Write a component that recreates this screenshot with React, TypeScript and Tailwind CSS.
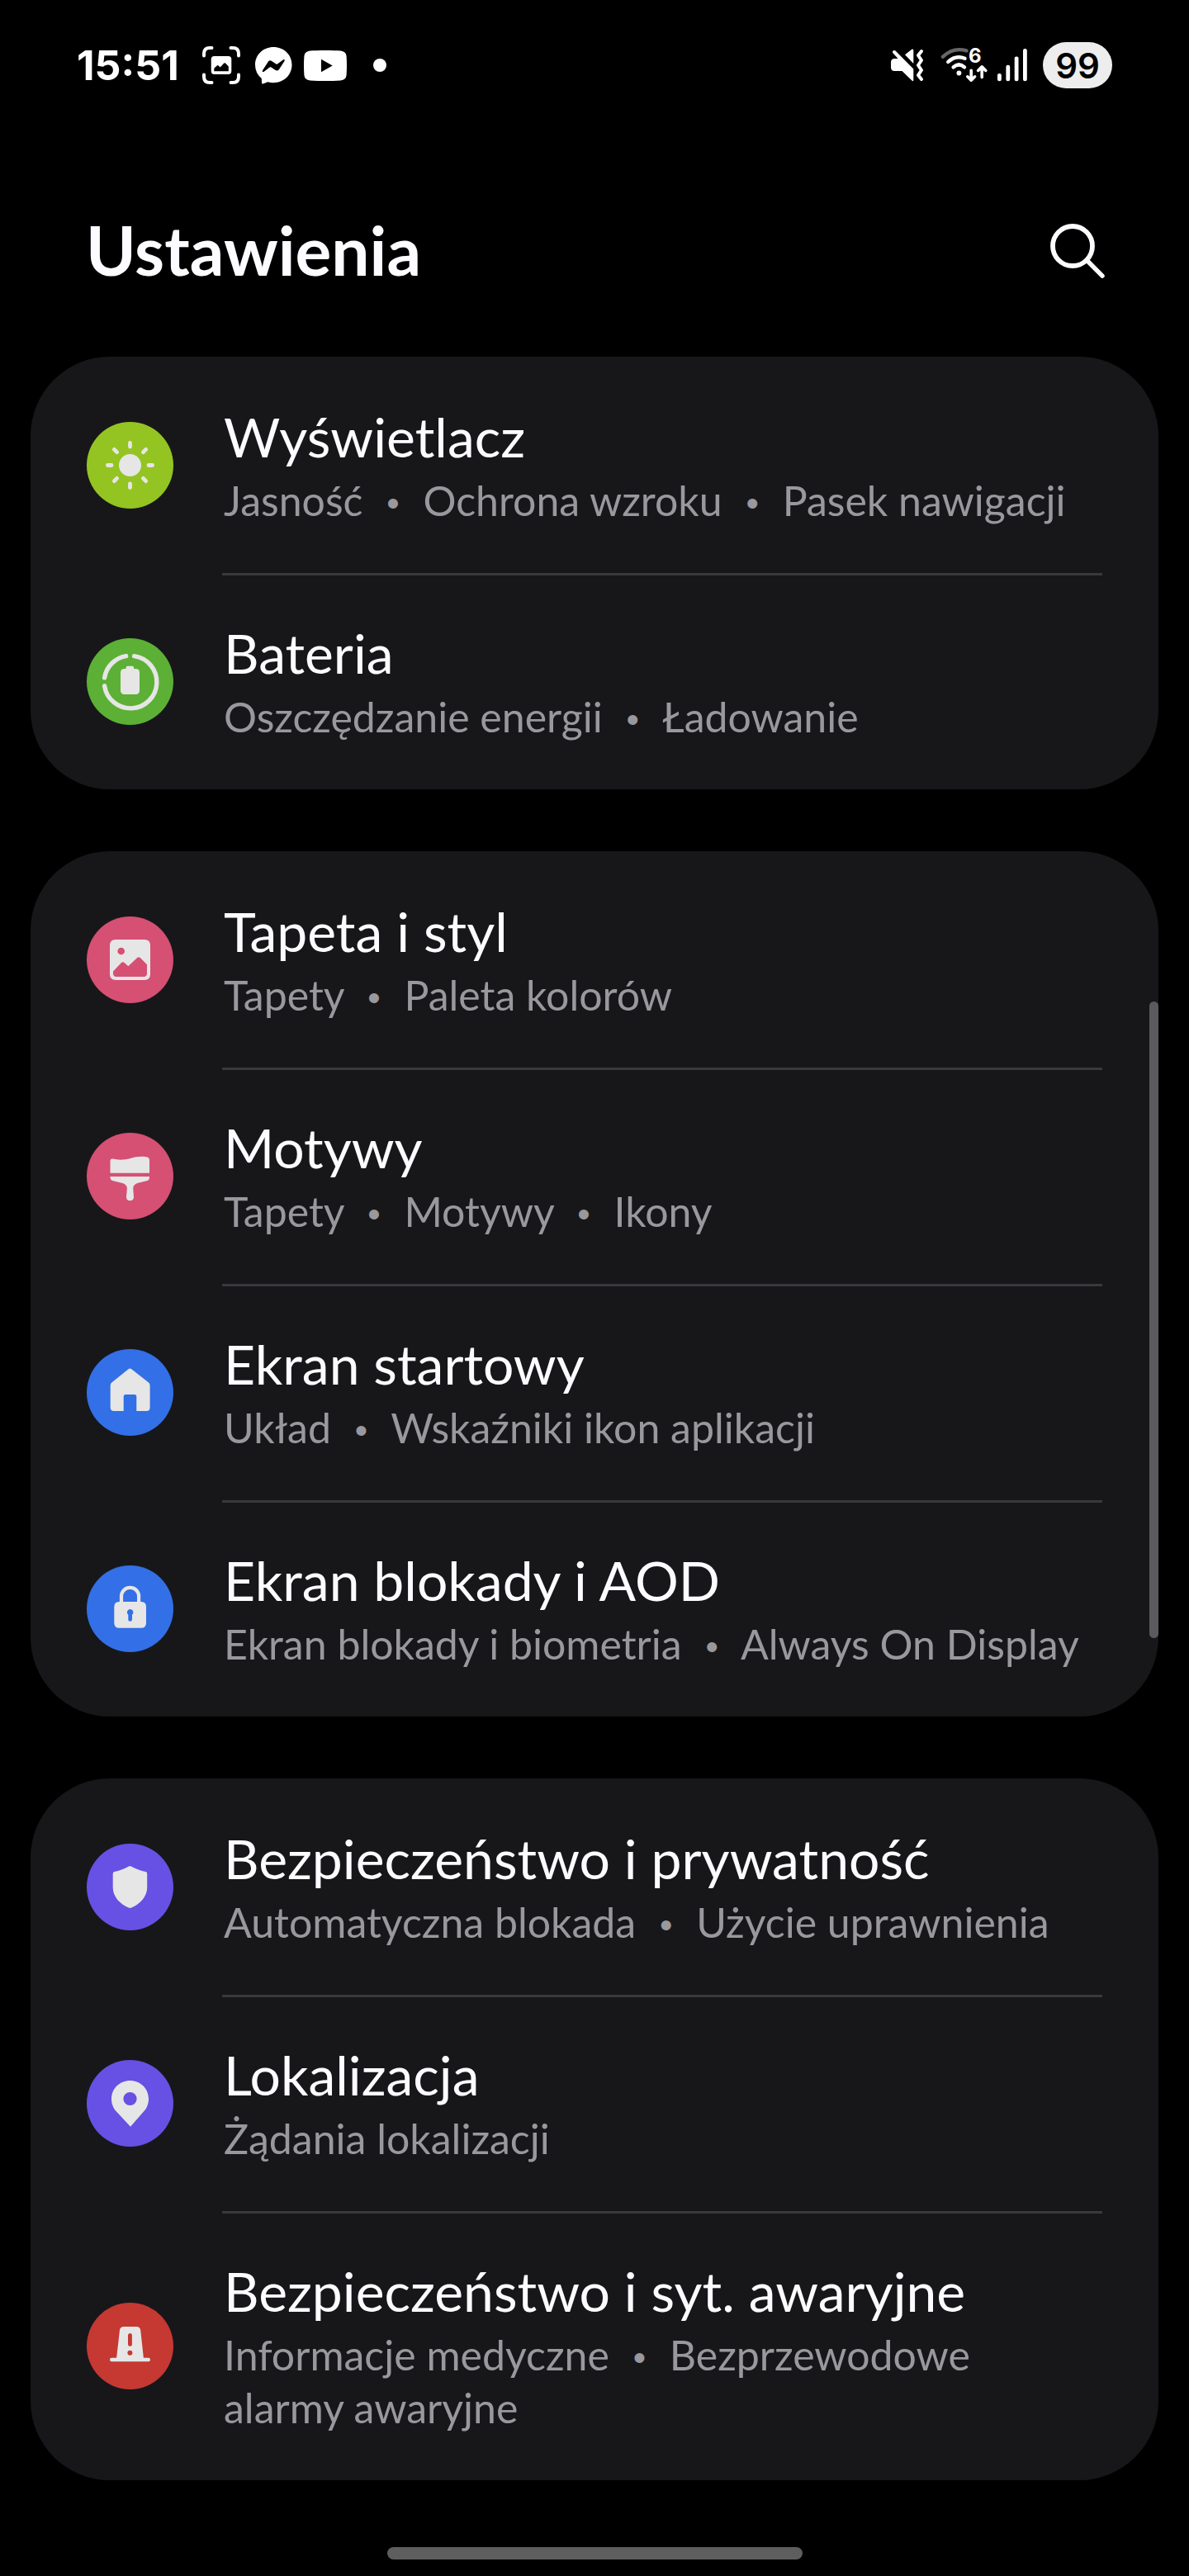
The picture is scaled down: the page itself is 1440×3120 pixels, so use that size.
import { Fragment } from 'react';
import type { ReactNode } from 'react';

// Types
interface SettingItem {
  title: string;
  details: string[];
  color: string;
  icon: ReactNode;
}

// Icons are drawn on the same 105 unit grid as the round badge
const SunIcon = (
  <>
    <circle cx="52.5" cy="52.5" r="13.5" />
    <g stroke="currentColor" strokeWidth="4.8" strokeLinecap="round">
      {[0, 45, 90, 135, 180, 225, 270, 315].map((angle) => (
        <path key={angle} d="M52.5 25.4V30" transform={`rotate(${angle} 52.5 52.5)`} />
      ))}
    </g>
  </>
);

const BatteryIcon = (
  <>
    <path
      d="M47.6 21.6A31.6 31.6 0 0 0 21.6 47.8M57.6 21.6A31.8 31.8 0 1 1 21.6 57.8"
      fill="none"
      stroke="currentColor"
      strokeWidth="5.4"
      strokeLinecap="round"
    />
    <rect x="41" y="37" width="23" height="31" rx="4.5" />
    <rect x="47.7" y="33.7" width="9.3" height="8" rx="1.5" />
  </>
);

const PictureIcon = (
  <path
    fillRule="evenodd"
    d="M35 28H70Q77 28 77 35V70Q77 77 70 77H35Q28 77 28 70V35Q28 28 35 28ZM41.7 37.7A4.3 4.3 0 1 0 41.7 46.3A4.3 4.3 0 1 0 41.7 37.7ZM32 66.5L42 56Q43.9 54.4 45.6 56L50.3 60.2L61.2 50Q63 48.4 64.8 50L73 58.2V69Q73 73 69 73H36Q32 73 32 69Z"
  />
);

const BrushIcon = (
  <>
    <path d="M28.5 34Q28.5 31 31.5 31.6C38 33.2 46 32.9 53 31C60 28.6 69 28 74 29.8Q76 30.6 76 33V48.7H28.5Z" />
    <path d="M28.5 53H76V54.6Q76 57.2 73.4 58L61.5 61Q56.4 62.8 56.2 67L57 77.5Q57 82.3 52.4 82.3Q48 82.3 48 77.5L48.9 67Q48.6 62.8 43.4 61L31.2 58Q28.5 57.2 28.5 54.6Z" />
  </>
);

const HomeIcon = (
  <path d="M50.5 24.2Q52.4 23 54.3 24.2L75 40.6Q76.6 42 76.6 44V70.8Q76.6 75 72.4 75H60.3V57.5Q60.3 55 57.8 55H47.2Q44.7 55 44.7 57.5V75H33Q28.7 75 28.7 70.8V44Q28.7 42 30.3 40.6Z" />
);

const LockIcon = (
  <>
    <path d="M42 47V36.5A10.6 10.6 0 0 1 63.1 36.5V47" fill="none" stroke="currentColor" strokeWidth="4.2" />
    <path
      fillRule="evenodd"
      d="M39.3 44H66Q72 44 72 50V69.7Q72 75.7 66 75.7H39.3Q33.3 75.7 33.3 69.7V50Q33.3 44 39.3 44ZM52.6 52.9A3.9 3.9 0 0 0 50.3 59.8V65.5Q50.3 67.8 52.6 67.8Q55 67.8 55 65.5V59.8A3.9 3.9 0 0 0 52.6 52.9Z"
    />
  </>
);

const ShieldIcon = (
  <path d="M51 27.4Q52.4 26.8 53.8 27.4C60 30.5 65.5 33 71.5 34Q73.2 34.4 73.2 36.4V53C73.2 64.5 64.5 73 54.2 77.6Q52.4 78.4 50.7 77.6C40.4 73 31.7 64.5 31.7 53V36.4Q31.7 34.4 33.5 34C39.4 33 45 30.5 51 27.4Z" />
);

const PinIcon = (
  <path
    fillRule="evenodd"
    d="M52.5 25C65 25 75 34.6 75 47.2C75 53.5 72.6 58.6 69 62.6L53 80.7L36 62.6C32.4 58.6 30 53.5 30 47.2C30 34.6 40 25 52.5 25ZM52.5 38.9A8.1 8.1 0 1 0 52.5 55.1A8.1 8.1 0 1 0 52.5 38.9Z"
  />
);

const SirenIcon = (
  <>
    <path
      fillRule="evenodd"
      d="M45 29H60Q65 29 65.3 34L69 68H36L39.9 34Q40.2 29 45 29ZM52.4 37Q50 37 50 39.5V50.3Q50 52.8 52.4 52.8Q54.9 52.8 54.9 50.3V39.5Q54.9 37 52.4 37ZM52.4 57.7A3 3 0 1 0 52.4 63.7A3 3 0 1 0 52.4 57.7Z"
    />
    <rect x="28" y="66.7" width="49" height="4.5" rx="2.2" />
  </>
);

const GROUPS: SettingItem[][] = [
  [
    { title: 'Wyświetlacz', details: ['Jasność', 'Ochrona wzroku', 'Pasek nawigacji'], color: 'bg-[#94c422]', icon: SunIcon },
    { title: 'Bateria', details: ['Oszczędzanie energii', 'Ładowanie'], color: 'bg-[#5cb035]', icon: BatteryIcon },
  ],
  [
    { title: 'Tapeta i styl', details: ['Tapety', 'Paleta kolorów'], color: 'bg-[#d55073]', icon: PictureIcon },
    { title: 'Motywy', details: ['Tapety', 'Motywy', 'Ikony'], color: 'bg-[#d55073]', icon: BrushIcon },
    { title: 'Ekran startowy', details: ['Układ', 'Wskaźniki ikon aplikacji'], color: 'bg-[#336fe6]', icon: HomeIcon },
    { title: 'Ekran blokady i AOD', details: ['Ekran blokady i biometria', 'Always On Display'], color: 'bg-[#336fe6]', icon: LockIcon },
  ],
  [
    { title: 'Bezpieczeństwo i prywatność', details: ['Automatyczna blokada', 'Użycie uprawnienia'], color: 'bg-[#6651e4]', icon: ShieldIcon },
    { title: 'Lokalizacja', details: ['Żądania lokalizacji'], color: 'bg-[#6651e4]', icon: PinIcon },
    { title: 'Bezpieczeństwo i syt. awaryjne', details: ['Informacje medyczne', 'Bezprzewodowe alarmy awaryjne'], color: 'bg-[#c53932]', icon: SirenIcon },
  ],
];

function StatusBar() {
  return (
    <div className="flex h-14 items-center justify-between px-[93px] font-['Inter',sans-serif]">
      <div className="flex items-center">
        <span className="text-[50px] leading-14 font-bold">15:51</span>

        {/* Screenshot */}
        <svg className="ml-7 h-[46px] w-[46px]" viewBox="0 0 46 46" aria-hidden="true">
          <path
            d="M2 11.5V9Q2 2 9 2H11.5M34.5 2H37Q44 2 44 9V11.5M44 34.5V37Q44 44 37 44H34.5M11.5 44H9Q2 44 2 37V34.5"
            fill="none"
            stroke="white"
            strokeWidth="4"
            strokeLinecap="round"
          />
          <path
            fill="white"
            fillRule="evenodd"
            d="M14.5 12H31.5Q35.3 12 35.3 16V30Q35.3 34 31.5 34H14.5Q10.7 34 10.7 30V16Q10.7 12 14.5 12ZM14.3 30.2H31.8V24.5L28 20.5Q27 19.8 26 20.8L21.8 25.4L19.5 23.4Q18.6 22.8 17.8 23.5L14.3 26.8Z"
          />
        </svg>

        {/* Messenger */}
        <svg className="ml-[18px] h-[45px] w-[45px]" viewBox="0 0 45 45" aria-hidden="true">
          <path
            fill="white"
            fillRule="evenodd"
            d="M22.3 0C34.8 0 44.5 9.3 44.5 21.5S34.8 43.2 22.3 43.2Q18.6 43.2 15.3 42.2L9.6 44.5Q8 45 8 43.3L7.8 37.9Q0 31.6 0 21.5C0 9.3 9.8 0 22.3 0ZM9 28.2Q8 30.7 10.4 29.9L17.6 24.6Q18.5 24 19.5 24.6L24.6 28.1Q27.2 29.3 29 27L35.5 17Q36.5 14.5 34.1 15.3L27 20.4Q26 21 25 20.3L19.7 16.7Q17.4 15.6 15.8 17.8Z"
          />
        </svg>

        {/* YouTube */}
        <svg className="ml-3.5 h-[37px] w-[52px]" viewBox="0 0 52 37" aria-hidden="true">
          <path
            fill="white"
            fillRule="evenodd"
            d="M26 0C34 0 40 .2 44.5.6Q51 1.2 51.6 7Q52.4 18.5 51.6 30Q51 35.8 44.5 36.4Q26 37.6 7.5 36.4Q1 35.8.4 30Q-.4 18.5.4 7Q1 1.2 7.5.6C12 .2 18 0 26 0ZM21 10.7V26.3L34.7 18.6Z"
          />
        </svg>

        <span className="ml-8 h-4 w-4 rounded-full bg-white" />
      </div>

      <div className="flex items-center">
        {/* Vibrate / muted */}
        <svg className="h-10 w-10" viewBox="0 0 40 40" aria-hidden="true">
          <path
            fill="white"
            d="M4.5 12H8.6L2.4 5.2Q1.4 3.6 2.6 2.4Q4 1.4 5.5 2.6L27.3 24.4V38Q27.3 40 25.4 38.6L13.5 27H4.5Q0 27 0 22.5V16.5Q0 12 4.5 12ZM17 7.3L25.3.8Q27.3-.2 27.3 2V18Z"
          />
          <path
            d="M37 3L33 8L37 14L33 20L37 26L33 32L37 37"
            fill="none"
            stroke="white"
            strokeWidth="4"
            strokeLinecap="round"
            strokeLinejoin="round"
          />
        </svg>

        {/* Wi-Fi 6 */}
        <svg className="ml-5 h-[42px] w-[57px] overflow-visible" viewBox="0 0 57 42" aria-hidden="true">
          <g fill="none" stroke="white" strokeLinecap="round" strokeLinejoin="round">
            <path d="M2.8 10.8Q15.5-1.2 31.5 3.4" stroke="#666666" strokeWidth="4.4" />
            <path d="M9.2 17Q18.5 8.2 29.5 12.8" strokeWidth="4.4" />
            <path d="M15.6 23.3Q22.4 17.5 29 23.3" strokeWidth="4.4" />
            <path d="M37.2 27.2V39M32.8 34.8L37.2 39.2L41.6 34.8" strokeWidth="3.6" />
            <path d="M50.2 35.6V23.2M45.6 27.4L50.2 22.8L54.8 27.4" strokeWidth="3.6" />
          </g>
          <circle cx="22.4" cy="30.5" r="2.9" fill="white" />
          <text x="34" y="18" fill="white" fontSize="24" fontWeight="700">6</text>
        </svg>

        {/* Signal */}
        <svg className="ml-3 h-10 w-[37px]" viewBox="0 0 37 40" fill="white" aria-hidden="true">
          <rect x="0" y="30" width="4.8" height="9.3" rx="2.2" />
          <rect x="10.4" y="19.7" width="4.8" height="19.6" rx="2.2" />
          <rect x="20.7" y="9.4" width="4.8" height="29.9" rx="2.2" />
          <rect x="31" y="0" width="4.8" height="39.3" rx="2.2" />
        </svg>

        <span className="ml-[18px] flex h-14 w-[84px] items-center justify-center rounded-full bg-[#ededed] text-[42px] font-semibold text-black">
          99
        </span>
      </div>
    </div>
  );
}

function SettingRow({ item, divided }: { item: SettingItem; divided: boolean }) {
  return (
    <li>
      <a href="#" className="flex items-center gap-[59px] px-[68px]">
        <span className={`h-[105px] w-[105px] shrink-0 rounded-full text-[#e6e6e6] ${item.color}`}>
          <svg viewBox="0 0 105 105" fill="currentColor" aria-hidden="true">
            {item.icon}
          </svg>
        </span>
        <span
          className={`min-w-0 flex-1 border-t-3 pt-[51px] pr-5 pb-14 pl-0.5 ${divided ? 'border-[#39393b]' : 'border-transparent'}`}
        >
          <span className="block text-[66px] leading-[86px] text-[#fcfbff]">{item.title}</span>
          <span className="mt-0.5 block text-[50px] leading-16 text-[#99989d]">
            {item.details.map((detail, index) => (
              <Fragment key={detail}>
                {index > 0 && (
                  <>
                    {' '}
                    <span className="mx-4 font-['Liberation_Sans',sans-serif] text-[44px] leading-none">•</span>{' '}
                  </>
                )}
                {detail}
              </Fragment>
            ))}
          </span>
        </span>
      </a>
    </li>
  );
}

export default function App() {
  return (
    <div className="flex min-h-screen flex-col bg-black pt-[51px] pb-5 font-['Lato',sans-serif] text-white">
      <StatusBar />

      {/* Header */}
      <header className="mt-[149px] flex items-center justify-between pr-[102px] pl-[104px]">
        <h1 className="pb-1 text-[82px] leading-[92px] font-bold text-[#fcfbff]">Ustawienia</h1>
        <button type="button" aria-label="Szukaj">
          <svg className="h-[66px] w-[66px]" viewBox="0 0 66 66" fill="none" stroke="#fcfbff" strokeLinecap="round" aria-hidden="true">
            <circle cx="27" cy="27" r="24" strokeWidth="5.8" />
            <path d="M45 45L63 63.2" strokeWidth="5.4" />
          </svg>
        </button>
      </header>

      {/* Settings list */}
      <main className="relative mx-[37px] mt-20 flex flex-col gap-[75px]">
        {GROUPS.map((group) => (
          <ul key={group[0].title} className="rounded-[96px] bg-[#17171a]">
            {group.map((item, index) => (
              <SettingRow key={item.title} item={item} divided={index > 0} />
            ))}
          </ul>
        ))}

        {/* Scroll thumb */}
        <div className="absolute top-[781px] right-0 h-[771px] w-[11px] rounded-full bg-[#5b5b5d]" />
      </main>

      {/* Gesture handle */}
      <div className="mx-auto mt-auto h-[15px] w-[503px] rounded-full bg-[#5e5e5e]" />
    </div>
  );
}
